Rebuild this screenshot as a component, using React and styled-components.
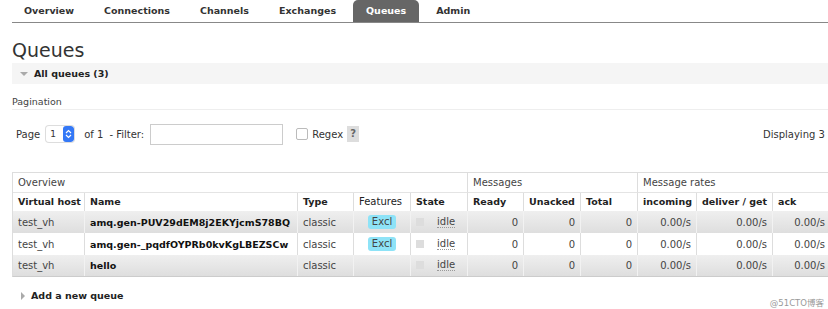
import React from "react"
import styled, { createGlobalStyle } from "styled-components"

const Global = createGlobalStyle`
  html, body {
    margin: 0;
    padding: 0;
    background: #fff;
    overflow: hidden;
  }
  body {
    font-family: "DejaVu Sans", Verdana, sans-serif;
    font-size: 10px;
    color: #444;
  }
`

const Page = styled.div`
  position: relative;
  width: 828px;
  height: 309px;
  overflow: hidden;
`

const Nav = styled.ul`
  display: flex;
  list-style: none;
  margin: 0 0 0 12px;
  padding: 0;
  border-bottom: 1px solid #888;
  height: 22px;
`
const Tab = styled.li`
  padding: 0 ${(p) => (p.$active ? 13 : 15)}px;
  margin: 0 ${(p) => (p.$active ? 2 : 0)}px;
  height: 22px;
  line-height: 22px;
  font-size: 9.5px;
  font-weight: bold;
  color: ${(p) => (p.$active ? "#fff" : "#333")};
  background: ${(p) => (p.$active ? "#666" : "transparent")};
  border-radius: ${(p) => (p.$active ? "5px 5px 0 0" : "0")};
  margin-left: ${(p) => (p.$first ? "-3px" : p.$active ? "2px" : "0")};
  white-space: nowrap;
`

const Main = styled.div`
  padding-left: 12px;
`
const Title = styled.h1`
  margin: 14px 0 0 0;
  height: 26px;
  line-height: 26px;
  font-size: 19px;
  font-weight: normal;
  color: #333;
`
const SectionBar = styled.div`
  display: flex;
  align-items: center;
  height: 21px;
  background: #f5f5f5;
  padding-left: 8px;
  gap: 3px;
  font-size: 9.5px;
  font-weight: bold;
  color: #222;
`
const Arrow = styled.span`
  display: inline-block;
  width: 0;
  height: 0;
  ${(p) =>
    p.$open
      ? `border-left: 4px solid transparent; border-right: 4px solid transparent; border-top: 4px solid #aaa;`
      : `border-top: 4px solid transparent; border-bottom: 4px solid transparent; border-left: 4px solid #aaa;`}
  margin-right: 3px;
`
const SubHead = styled.div`
  margin-top: 11px;
  line-height: 14px;
  font-size: 9.5px;
  color: #444;
  border-bottom: 1px solid #eee;
`
const PagerRow = styled.div`
  display: flex;
  align-items: center;
  height: 22px;
  margin-top: 13px;
  padding-left: 4px;
  white-space: nowrap;
  color: #333;
`
const Select = styled.div`
  display: flex;
  align-items: center;
  margin-left: 6px;
  width: 28px;
  height: 16px;
  border-radius: 3px;
  box-shadow: 0 0 0 1px #ddd;
  background: #fff;
  overflow: hidden;
  font-size: 9px;
  span {
    flex: 1;
    padding-left: 4px;
  }
`
const Stepper = styled.div`
  width: 11px;
  height: 16px;
  background: #3478f6;
  border-radius: 3px;
  display: flex;
  align-items: center;
  justify-content: center;
`
const Label = styled.span`
  margin-left: ${(p) => p.$ml || 0}px;
`
const Filter = styled.input`
  margin: 0 0 0 6px;
  width: 133px;
  height: 21px;
  box-sizing: border-box;
  border: 1px solid #ccc;
  padding: 0 4px;
`
const Check = styled.span`
  margin-left: 13px;
  width: 10px;
  height: 10px;
  border: 1px solid #bbb;
  border-radius: 2px;
  background: #fff;
`
const Help = styled.span`
  margin-left: 4px;
  width: 12px;
  height: 16px;
  line-height: 16px;
  text-align: center;
  background: #ddd;
  color: #666;
  font-weight: bold;
`
const Displaying = styled.span`
  position: absolute;
  left: 763px;
`

const Table = styled.table`
  margin-top: 27px;
  border-collapse: separate;
  border-spacing: 0;
  table-layout: fixed;
  width: 818px;
  border-top: 1px solid #ddd;
  border-left: 1px solid #ddd;
  border-bottom: 1px solid #ccc;
`
const GroupCell = styled.th`
  text-align: left;
  font-weight: normal;
  padding: 4px 5px 3px;
  line-height: 12px;
  border-right: 1px solid #ddd;
  border-bottom: 1px solid #e4e4e4;
  color: #444;
`
const HeadCell = styled.th`
  text-align: left;
  font-size: ${(p) => (p.$light ? "10px" : "9.5px")};
  font-weight: ${(p) => (p.$light ? "normal" : "bold")};
  padding: 3px 5px;
  line-height: 12px;
  border-right: 1px solid #ddd;
  color: #222;
  white-space: nowrap;
  overflow: hidden;
`
const Row = styled.tr`
  background: ${(p) =>
    p.$alt ? "linear-gradient(to bottom, #efefef, #dedede)" : "#fff"};
`
const Cell = styled.td`
  padding: 4px 5px;
  line-height: 13px;
  border-right: 1px solid ${(p) => (p.$altBorder ? "#f2f2f2" : "#ddd")};
  text-align: ${(p) => (p.$right ? "right" : p.$center ? "center" : "left")};
  font-size: ${(p) => (p.$bold ? "9.5px" : "10px")};
  font-weight: ${(p) => (p.$bold ? "bold" : "normal")};
  color: ${(p) => (p.$bold ? "#111" : "#444")};
  white-space: nowrap;
  overflow: hidden;
`
const Badge = styled.span`
  display: inline-block;
  background: #8ee3f7;
  color: #444;
  padding: 1px 4px;
  line-height: 12px;
  border-radius: 3px;
`
const StateBox = styled.span`
  display: inline-flex;
  align-items: center;
  gap: 13px;
  i {
    display: inline-block;
    width: 8px;
    height: 8px;
    background: #ddd;
  }
  abbr {
    text-decoration: none;
    border-bottom: 1px dotted #999;
    line-height: 11px;
  }
`

const AddRow = styled.div`
  display: flex;
  align-items: center;
  margin-top: 13px;
  padding-left: 9px;
  gap: 3px;
  font-size: 9.5px;
  font-weight: bold;
  color: #222;
`
const Watermark = styled.span`
  position: absolute;
  right: 4px;
  bottom: 1px;
  font-size: 8.5px;
  color: #999;
  font-family: "DejaVu Sans", "Noto Sans CJK SC", sans-serif;
`

const widths = [72, 213, 56, 57, 57, 56, 57, 57, 59, 76, 58]

const queues = [
  { name: "amq.gen-PUV29dEM8j2EKYjcmS78BQ", excl: true },
  { name: "amq.gen-_pqdfOYPRb0kvKgLBEZSCw", excl: true },
  { name: "hello", excl: false },
]

export default function App() {
  return (
    <Page>
      <Global />
      <Nav>
        {["Overview", "Connections", "Channels", "Exchanges", "Queues", "Admin"].map((t, i) => (
          <Tab key={t} $first={i === 0} $active={t === "Queues"}>
            {t}
          </Tab>
        ))}
      </Nav>
      <Main>
        <Title>Queues</Title>
        <SectionBar>
          <Arrow $open />
          All queues (3)
        </SectionBar>
        <SubHead>Pagination</SubHead>
        <PagerRow>
          <Label>Page</Label>
          <Select>
            <span>1</span>
            <Stepper>
              <svg width="7" height="10" viewBox="0 0 7 10">
                <path d="M1 4 L3.5 1.5 L6 4 M1 6 L3.5 8.5 L6 6" stroke="#fff" strokeWidth="1.2" fill="none" />
              </svg>
            </Stepper>
          </Select>
          <Label $ml={10}>of 1</Label>
          <Label $ml={6}>- Filter:</Label>
          <Filter />
          <Check />
          <Label $ml={4}>Regex</Label>
          <Help>?</Help>
          <Displaying>Displaying 3 items , page size up to:</Displaying>
        </PagerRow>
        <Table>
          <colgroup>
            {widths.map((w, i) => (
              <col key={i} style={{ width: w }} />
            ))}
          </colgroup>
          <thead>
            <tr>
              <GroupCell colSpan={5}>Overview</GroupCell>
              <GroupCell colSpan={3}>Messages</GroupCell>
              <GroupCell colSpan={3}>Message rates</GroupCell>
            </tr>
            <tr>
              <HeadCell>Virtual host</HeadCell>
              <HeadCell>Name</HeadCell>
              <HeadCell>Type</HeadCell>
              <HeadCell $light>Features</HeadCell>
              <HeadCell>State</HeadCell>
              <HeadCell>Ready</HeadCell>
              <HeadCell>Unacked</HeadCell>
              <HeadCell>Total</HeadCell>
              <HeadCell>incoming</HeadCell>
              <HeadCell>deliver / get</HeadCell>
              <HeadCell>ack</HeadCell>
            </tr>
          </thead>
          <tbody>
            {queues.map((q, i) => {
              const alt = i % 2 === 0
              return (
                <Row key={q.name} $alt={alt}>
                  <Cell $altBorder={alt}>test_vh</Cell>
                  <Cell $altBorder={alt} $bold>{q.name}</Cell>
                  <Cell $altBorder={alt}>classic</Cell>
                  <Cell $altBorder={alt} $center>
                    {q.excl && <Badge>Excl</Badge>}
                  </Cell>
                  <Cell $altBorder={alt}>
                    <StateBox>
                      <i />
                      <abbr>idle</abbr>
                    </StateBox>
                  </Cell>
                  <Cell $altBorder={alt} $right>0</Cell>
                  <Cell $altBorder={alt} $right>0</Cell>
                  <Cell $altBorder={alt} $right>0</Cell>
                  <Cell $altBorder={alt} $right>0.00/s</Cell>
                  <Cell $altBorder={alt} $right>0.00/s</Cell>
                  <Cell $altBorder={alt} $right>0.00/s</Cell>
                </Row>
              )
            })}
          </tbody>
        </Table>
        <AddRow>
          <Arrow />
          Add a new queue
        </AddRow>
      </Main>
      <Watermark>@51CTO博客</Watermark>
    </Page>
  )
}
